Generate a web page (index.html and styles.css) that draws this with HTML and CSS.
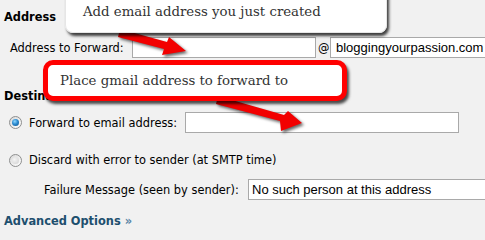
FILE: index.html
```
<!DOCTYPE html>
<html>
<head>
<meta charset="utf-8">
<link rel="stylesheet" href="styles.css">
</head>
<body>
<div class="form">
  <h3 class="sect">Address</h3>
  <div class="row r1">
    <label class="lbl">Address to Forward:</label>
    <input class="field f1" type="text" value="">
    <span class="at">@</span>
    <input class="field f2" type="text" value="bloggingyourpassion.com">
  </div>
  <h3 class="sect dest">Destination</h3>
  <div class="row r2">
    <span class="radio on"></span>
    <label class="lbl">Forward to email address:</label>
    <input class="field f3" type="text" value="">
  </div>
  <div class="row r3">
    <span class="radio"></span>
    <label class="lbl">Discard with error to sender (at SMTP time)</label>
  </div>
  <div class="row r4">
    <label class="lbl">Failure Message (seen by sender):</label>
    <input class="field f4" type="text" value="No such person at this address">
  </div>
  <a class="adv" href="#">Advanced Options <span class="raquo">»</span></a>
</div>

<svg class="arrows" width="485" height="228" viewBox="0 0 485 228">
  <polygon points="120,29 167,42 169,37 186,51 162,55 164,49 118,37" fill="#f20000"/>
  <polygon points="218,96 284,115 288,111 302,123 281,131 280,121 216,104" fill="#f20000"/>
</svg>

<div class="callout c1">Add email address you just created</div>
<div class="callout c2">Place gmail address to forward to</div>
</body>
</html>
```
FILE: styles.css
```
* { box-sizing: border-box; }

body {
  margin: 0;
  width: 485px;
  height: 228px;
  overflow: hidden;
  position: relative;
  background: #f1f1f1;
  font-family: "DejaVu Sans", Verdana, sans-serif;
  font-size: 11.4px;
  color: #000;
}

.form { padding-top: 8px; }

.sect {
  margin: 0;
  height: 18px;
  line-height: 18px;
  padding-left: 4px;
  font-size: 11.4px;
  font-weight: bold;
  color: #000;
}

.dest { margin-top: 29px; }

.row { display: flex; align-items: center; }

.lbl { white-space: nowrap; flex: none; }

.field {
  flex: none;
  height: 21px;
  margin: 0;
  padding: 0 4px;
  border: 1px solid #a9a9a9;
  border-radius: 0;
  background: #fff;
  font-family: "Liberation Sans", Arial, sans-serif;
  font-size: 13px;
  color: #000;
  outline: none;
}

.r1 { margin-top: 11px; height: 21px; padding-left: 10px; }
.r1 .lbl { width: 122px; }
.f1 { width: 184px; }
.at { width: 14px; padding-left: 2px; flex: none; }
.f2 { width: 170px; padding-left: 5px; }

.r2 { margin-top: 7px; height: 21px; padding-left: 9px; }
.r2 .lbl { width: 156px; margin-left: 7px; }
.f3 { width: 274px; }

.r3 { margin-top: 17px; height: 20px; padding-left: 9px; }
.r3 .lbl { margin-left: 7px; }

.r4 { margin-top: 9px; height: 21px; padding-left: 44px; }
.r4 .lbl { width: 204px; }
.f4 { width: 250px; padding-left: 3px; }

.radio {
  flex: none;
  position: relative;
  width: 13px;
  height: 13px;
  border-radius: 50%;
  border: 1px solid #8e8f8f;
  background: linear-gradient(135deg, #d8d8d8, #ffffff);
}
.radio::after {
  content: "";
  position: absolute;
  left: 2px;
  top: 2px;
  width: 7px;
  height: 7px;
  border-radius: 50%;
  background: radial-gradient(circle at 35% 35%, #f4f4f4, #d0d0d0);
}
.radio.on::after {
  background: radial-gradient(circle at 40% 35%, #8fd8ff 0, #2b8ad0 45%, #0d4f86 100%);
}

.adv {
  display: block;
  margin-top: 12px;
  height: 18px;
  line-height: 18px;
  padding-left: 4px;
  font-weight: bold;
  color: #1d4f6e;
  text-decoration: none;
}
.raquo { color: #5b86a6; font-weight: bold; }

.arrows {
  position: absolute;
  left: 0;
  top: 0;
  filter: drop-shadow(2px 2px 1.5px rgba(0, 0, 0, 0.6));
}

.callout {
  position: absolute;
  background: #fff;
  font-family: "DejaVu Serif", "Liberation Serif", serif;
  font-size: 13.3px;
  line-height: 16px;
  color: #333;
  white-space: nowrap;
}

.c1 {
  left: 65px;
  top: -12px;
  width: 322px;
  height: 45px;
  padding: 16px 0 0 18px;
  border-radius: 8px;
  box-shadow: 2px 3px 3px rgba(0, 0, 0, 0.75), inset 0 0 0 1px #e6e6e6;
}

.c2 {
  left: 43px;
  top: 60px;
  width: 304px;
  height: 41px;
  padding-left: 12px;
  display: flex;
  align-items: center;
  border: 5px solid #f00;
  border-radius: 10px;
  box-shadow: 2px 3px 3px rgba(0, 0, 0, 0.7);
}
```
